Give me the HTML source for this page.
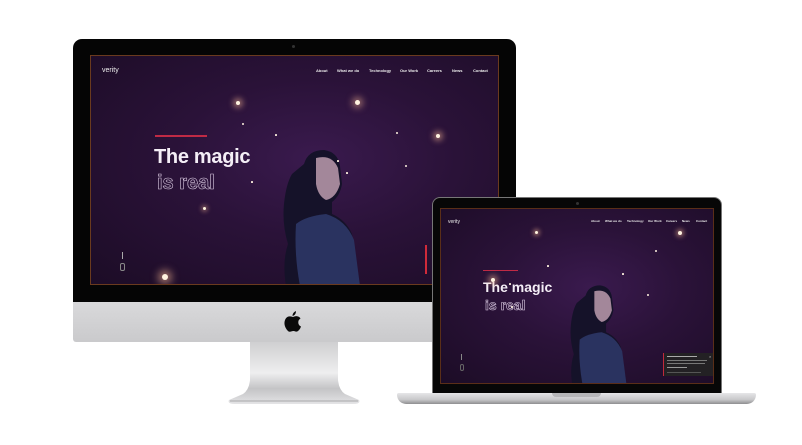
<!DOCTYPE html>
<html><head><meta charset="utf-8"><style>
*{margin:0;padding:0;box-sizing:border-box}
body{width:802px;height:445px;background:#fff;position:relative;overflow:hidden;font-family:"Liberation Sans",sans-serif}
.a{position:absolute}
.scr{position:absolute;overflow:hidden;background:radial-gradient(ellipse at 55% 45%,#3a1a4e 0%,#2a1238 45%,#1c0c26 100%)}
.star{position:absolute;border-radius:50%;background:#fff3e0}
.nav{position:absolute;color:#eee;font-weight:bold;white-space:nowrap}
.outline{color:transparent;-webkit-text-stroke:0.6px #d8c8e0;font-weight:bold}
</style></head><body>

<!-- iMac stand -->
<svg class="a" style="left:225px;top:340px" width="140" height="68">
<defs><linearGradient id="st" x1="0" y1="0" x2="0" y2="1"><stop offset="0" stop-color="#cfcfd1"/><stop offset=".5" stop-color="#eeeeef"/><stop offset=".75" stop-color="#c4c4c6"/><stop offset="1" stop-color="#e4e4e6"/></linearGradient></defs>
<path d="M25 2 L113 2 L113 40 Q114 50 120 54 L134 60 Q136 64 128 64 L10 64 Q2 64 4 60 L18 54 Q24 50 25 40 Z" fill="url(#st)"/>
<path d="M5 61 L133 61" stroke="#a8a8aa" stroke-width="1"/>
</svg>

<!-- iMac body -->
<div class="a" style="left:73px;top:39px;width:443px;height:264px;background:#050505;border-radius:9px 9px 0 0"></div>
<div class="a" style="left:73px;top:302px;width:443px;height:40px;background:linear-gradient(#d9d9db,#cacacc);border-radius:0 0 3px 3px"></div>
<div class="a" style="left:292px;top:45px;width:3px;height:3px;border-radius:50%;background:#333"></div>
<svg class="a" style="left:284px;top:311px" width="18" height="21" viewBox="0 0 18 21"><path d="M12 0 Q12 4 8.5 5 Q8.5 1.5 12 0Z M9 6 Q11 5 13 5.2 Q15.5 5.5 16.5 7.5 Q14 9 14.3 12 Q14.6 14.5 17 15.5 Q16 18.5 14 20 Q12.8 21 11.5 20.5 Q10 19.8 9 20 Q7.5 20.3 6 20.7 Q4.6 21 3 19 Q0 15 0.5 11 Q1 7 4 5.6 Q6 5 9 6Z" fill="#0a0a0a"/></svg>

<!-- iMac screen -->
<div class="scr" style="left:90px;top:55px;width:409px;height:230px;border:1px solid #6a3a1e">
 <div class="nav" style="left:11px;top:11px;font-size:7px;font-weight:normal">verity</div>
 <div class="nav" style="left:225px;top:12px;font-size:4px;word-spacing:0">About</div>
 <div class="nav" style="left:246px;top:12px;font-size:4px">What we do</div>
 <div class="nav" style="left:278px;top:12px;font-size:4px">Technology</div>
 <div class="nav" style="left:309px;top:12px;font-size:4px">Our Work</div>
 <div class="nav" style="left:336px;top:12px;font-size:4px">Careers</div>
 <div class="nav" style="left:361px;top:12px;font-size:4px">News</div>
 <div class="nav" style="left:382px;top:12px;font-size:4px">Contact</div>
 <div class="a" style="left:64px;top:79px;width:52px;height:2px;background:#c02a45"></div>
 <div class="a" style="left:63px;top:90px;font-size:20px;font-weight:bold;color:#f4eef6;letter-spacing:-0.3px">The magic</div>
 <div class="a outline" style="left:66px;top:116px;font-size:20px">is real</div>
 <svg class="a" style="left:185px;top:88px" width="90" height="142" viewBox="0 0 90 142">
  <path d="M28 20 Q32 6 48 6 Q62 8 64 22 L66 40 Q64 52 56 58 L56 70 Q70 76 76 90 L84 142 L10 142 Q6 118 12 100 Q6 80 8 60 Q10 40 16 30 Z" fill="#151229"/>
  <path d="M20 80 Q30 72 50 70 Q70 76 78 96 L84 142 L24 142 Q18 110 20 80Z" fill="#2a3360"/>
  <path d="M40 14 Q56 10 62 24 L64 40 Q60 54 50 56 Q42 52 40 40 Z" fill="#a3879a"/>
 </svg>
 <div class="a" style="left:334px;top:189px;width:2px;height:29px;background:#d02a3a"></div>
 <div class="a" style="left:31px;top:196px;width:1px;height:7px;background:#aaa"></div>
 <div class="a" style="left:29px;top:207px;width:5px;height:8px;border:1px solid #888;border-radius:2px"></div>
 <div class="star" style="left:145px;top:45px;width:4px;height:4px;box-shadow:0 0 6px 3px rgba(255,190,150,.5)"></div>
 <div class="star" style="left:264px;top:44px;width:5px;height:5px;box-shadow:0 0 7px 3px rgba(255,190,150,.5)"></div>
 <div class="star" style="left:151px;top:67px;width:2px;height:2px"></div>
 <div class="star" style="left:184px;top:78px;width:1.5px;height:1.5px"></div>
 <div class="star" style="left:305px;top:76px;width:2px;height:2px"></div>
 <div class="star" style="left:345px;top:78px;width:4px;height:4px;box-shadow:0 0 6px 3px rgba(255,190,150,.5)"></div>
 <div class="star" style="left:246px;top:104px;width:1.5px;height:1.5px"></div>
 <div class="star" style="left:314px;top:109px;width:2px;height:2px"></div>
 <div class="star" style="left:255px;top:116px;width:1.5px;height:1.5px"></div>
 <div class="star" style="left:160px;top:125px;width:1.5px;height:1.5px"></div>
 <div class="star" style="left:112px;top:151px;width:3px;height:3px;box-shadow:0 0 4px 2px rgba(255,190,150,.4)"></div>
 <div class="star" style="left:71px;top:218px;width:6px;height:6px;box-shadow:0 0 8px 4px rgba(255,190,150,.55)"></div>
</div>

<!-- Laptop -->
<div class="a" style="left:432px;top:197px;width:290px;height:197px;background:#070707;border-radius:8px 8px 0 0;border:1px solid #777"></div>
<div class="a" style="left:576px;top:202px;width:3px;height:3px;border-radius:50%;background:#333"></div>
<div class="scr" style="left:440px;top:208px;width:274px;height:176px;border:1px solid #5a2e18">
 <div class="nav" style="left:7px;top:10px;font-size:5px;font-weight:normal">verity</div>
 <div class="nav" style="left:150px;top:10px;font-size:3px">About</div>
 <div class="nav" style="left:164px;top:10px;font-size:3px">What we do</div>
 <div class="nav" style="left:186px;top:10px;font-size:3px">Technology</div>
 <div class="nav" style="left:207px;top:10px;font-size:3px">Our Work</div>
 <div class="nav" style="left:225px;top:10px;font-size:3px">Careers</div>
 <div class="nav" style="left:241px;top:10px;font-size:3px">News</div>
 <div class="nav" style="left:255px;top:10px;font-size:3px">Contact</div>
 <div class="a" style="left:42px;top:61px;width:35px;height:1px;background:#c02a45"></div>
 <div class="a" style="left:42px;top:70px;font-size:14px;font-weight:bold;color:#f4eef6">The magic</div>
 <div class="a outline" style="left:44px;top:88px;font-size:14px">is real</div>
 <svg class="a" style="left:122px;top:72px" width="70" height="104" viewBox="0 0 90 142">
  <path d="M28 20 Q32 6 48 6 Q62 8 64 22 L66 40 Q64 52 56 58 L56 70 Q70 76 76 90 L84 142 L10 142 Q6 118 12 100 Q6 80 8 60 Q10 40 16 30 Z" fill="#151229"/>
  <path d="M20 80 Q30 72 50 70 Q70 76 78 96 L84 142 L24 142 Q18 110 20 80Z" fill="#2a3360"/>
  <path d="M40 14 Q56 10 62 24 L64 40 Q60 54 50 56 Q42 52 40 40 Z" fill="#a3879a"/>
 </svg>
 <div class="a" style="left:222px;top:144px;width:52px;height:23px;background:#232124;border-left:1px solid #c02a3a">
  <div class="a" style="left:3px;top:3px;width:30px;height:1px;background:#aaa"></div>
  <div class="a" style="left:3px;top:7px;width:40px;height:1px;background:#777"></div>
  <div class="a" style="left:3px;top:10px;width:38px;height:1px;background:#777"></div>
  <div class="a" style="left:3px;top:14px;width:20px;height:1px;background:#999"></div>
  <div class="a" style="left:3px;top:19px;width:34px;height:1px;background:#555"></div>
  <div class="a" style="left:45px;top:1px;color:#ccc;font-size:4px">×</div>
 </div>
 <div class="a" style="left:20px;top:145px;width:1px;height:6px;background:#888"></div>
 <div class="a" style="left:19px;top:155px;width:4px;height:7px;border:1px solid #666;border-radius:2px"></div>
 <div class="star" style="left:94px;top:22px;width:3px;height:3px;box-shadow:0 0 4px 2px rgba(255,190,150,.5)"></div>
 <div class="star" style="left:237px;top:22px;width:4px;height:4px;box-shadow:0 0 5px 2px rgba(255,190,150,.5)"></div>
 <div class="star" style="left:214px;top:41px;width:2px;height:2px"></div>
 <div class="star" style="left:106px;top:56px;width:1.5px;height:1.5px"></div>
 <div class="star" style="left:181px;top:64px;width:1.5px;height:1.5px"></div>
 <div class="star" style="left:68px;top:74px;width:1.5px;height:1.5px"></div>
 <div class="star" style="left:206px;top:85px;width:2px;height:2px"></div>
 <div class="star" style="left:50px;top:69px;width:4px;height:4px;box-shadow:0 0 6px 3px rgba(255,190,150,.5)"></div>
 <div class="star" style="left:70px;top:97px;width:2px;height:2px"></div>
</div>
<div class="a" style="left:397px;top:393px;width:359px;height:11px;background:linear-gradient(#e6e6e8,#c8c8ca 60%,#8e8e90);border-radius:2px 2px 10px 10px"></div>
<div class="a" style="left:552px;top:393px;width:49px;height:4px;background:#b7b7b9;border-radius:0 0 4px 4px"></div>
</body></html>
